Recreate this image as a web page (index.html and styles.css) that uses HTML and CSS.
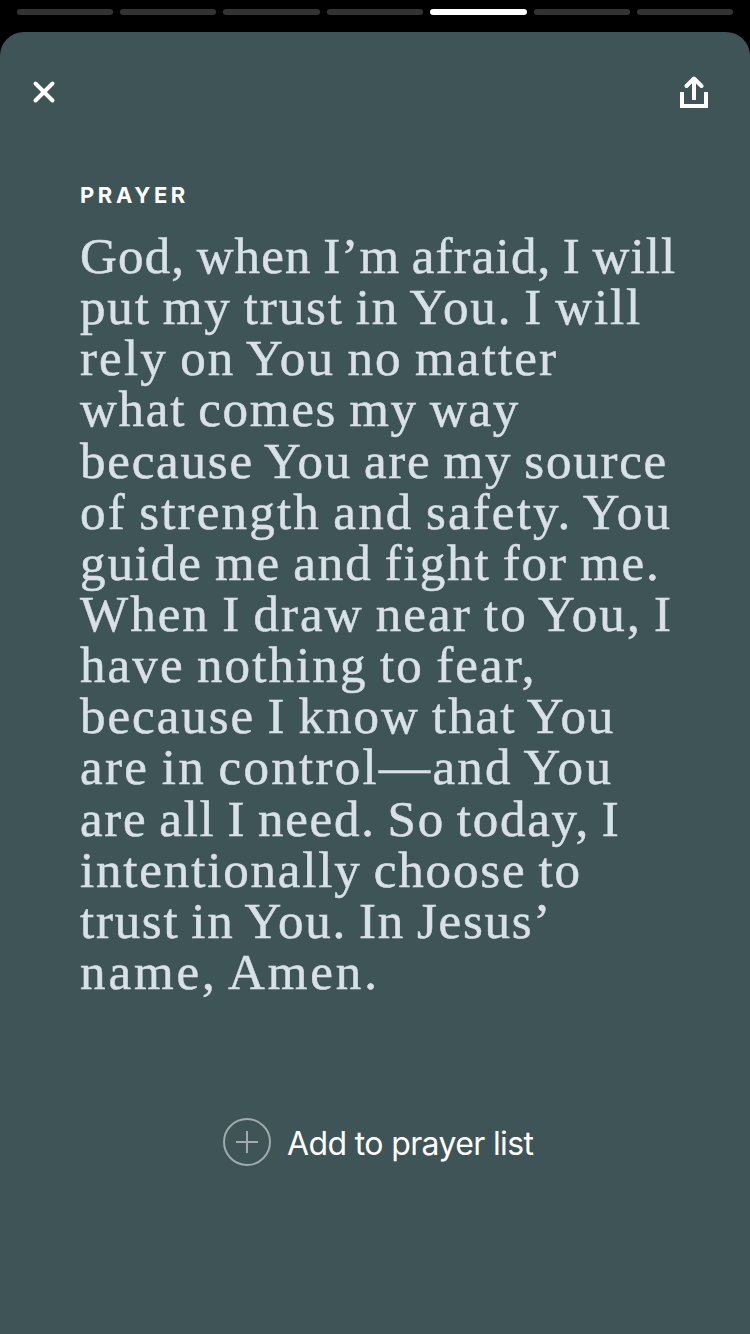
FILE: index.html
```html
<!DOCTYPE html>
<html lang="en">
<head>
<meta charset="utf-8">
<title>Prayer</title>
<link rel="stylesheet" href="styles.css">
</head>
<body>
<div class="progress">
<span class="step"></span><span class="step"></span><span class="step"></span><span class="step"></span><span class="step current"></span><span class="step"></span><span class="step"></span>
</div>
<main class="card">
<header class="toolbar">
<svg class="close" viewBox="0 0 24 24"><path d="M3.5 3.5 20.5 20.5M20.5 3.5 3.5 20.5"/></svg>
<svg class="share" viewBox="0 0 28 32"><path d="M2 16V30H26V16M14 24V3"/><path class="round" d="M6.5 10 14 2.5 21.5 10"/></svg>
</header>
<section class="content">
<h1 class="label">PRAYER</h1>
<p class="prayer">
<span class="line">God, when I’m afraid, I will</span>
<span class="line">put my trust in You. I will</span>
<span class="line">rely on You no matter</span>
<span class="line">what comes my way</span>
<span class="line">because You are my source</span>
<span class="line">of strength and safety. You</span>
<span class="line">guide me and fight for me.</span>
<span class="line">When I draw near to You, I</span>
<span class="line">have nothing to fear,</span>
<span class="line">because I know that You</span>
<span class="line">are in control—and You</span>
<span class="line">are all I need. So today, I</span>
<span class="line">intentionally choose to</span>
<span class="line">trust in You. In Jesus’</span>
<span class="line">name, Amen.</span>
</p>
</section>
<div class="action">
<svg class="plus" viewBox="0 0 48 48"><circle cx="24" cy="24" r="23"/><path d="M24 13V35M13 24H35"/></svg>
<span class="action-text">Add to prayer list</span>
</div>
</main>
</body>
</html>
```
FILE: styles.css
```css
* { box-sizing: border-box; }
body { margin: 0; width: 750px; height: 1334px; background: #000; display: flex; flex-direction: column; overflow: hidden; }
.progress { height: 32px; padding: 8.5px 16.5px 0; display: flex; gap: 7px; flex: none; }
.step { flex: 1; height: 6.5px; border-radius: 3px; background: #333; }
.current { background: #fff; }
.card { flex: 1; background: #3f5456; border-radius: 24px 24px 0 0; color: #fff; font-family: Inter, sans-serif; }
.toolbar { display: flex; justify-content: space-between; align-items: center; height: 120px; padding: 0 42px 0 32px; }
.close { width: 24px; height: 24px; fill: none; stroke: #fff; stroke-width: 4; stroke-linecap: round; }
.share { width: 28px; height: 32px; fill: none; stroke: #fff; stroke-width: 4; }
.round { stroke-linecap: round; stroke-linejoin: round; }
.content { padding: 31px 0 0 80px; }
.label { margin: 0; font-size: 22px; line-height: 24px; font-weight: 700; letter-spacing: 3.6px; }
.prayer { margin: 24px 0 0; font-family: "Source Serif Pro", "Liberation Serif", serif; font-size: 51px; line-height: 51.14px; word-spacing: -2.5px; color: #d8e0e8; -webkit-text-stroke: 0.5px #d8e0e8; }
.line { display: block; white-space: nowrap; }
.line:nth-child(1) { letter-spacing: 1.16px; }
.line:nth-child(2) { letter-spacing: 1.85px; }
.line:nth-child(3) { letter-spacing: 2.13px; }
.line:nth-child(4) { letter-spacing: 1.75px; }
.line:nth-child(5) { letter-spacing: 1.77px; }
.line:nth-child(6) { letter-spacing: 2.17px; }
.line:nth-child(7) { letter-spacing: 1.9px; }
.line:nth-child(8) { letter-spacing: 2.03px; }
.line:nth-child(9) { letter-spacing: 2.1px; }
.line:nth-child(10) { letter-spacing: 1.97px; }
.line:nth-child(11) { letter-spacing: 2.3px; }
.line:nth-child(12) { letter-spacing: 1.71px; }
.line:nth-child(13) { letter-spacing: 1.84px; }
.line:nth-child(14) { letter-spacing: 1.74px; }
.line:nth-child(15) { letter-spacing: 2.9px; }
.action { display: flex; align-items: center; gap: 16px; margin: 120px 0 0 223px; height: 48px; }
.plus { width: 48px; height: 48px; fill: none; stroke: #a0aaac; stroke-width: 2; }
.action-text { padding-top: 3px; font-size: 32px; line-height: 40px; letter-spacing: -0.63px; white-space: nowrap; }
```
